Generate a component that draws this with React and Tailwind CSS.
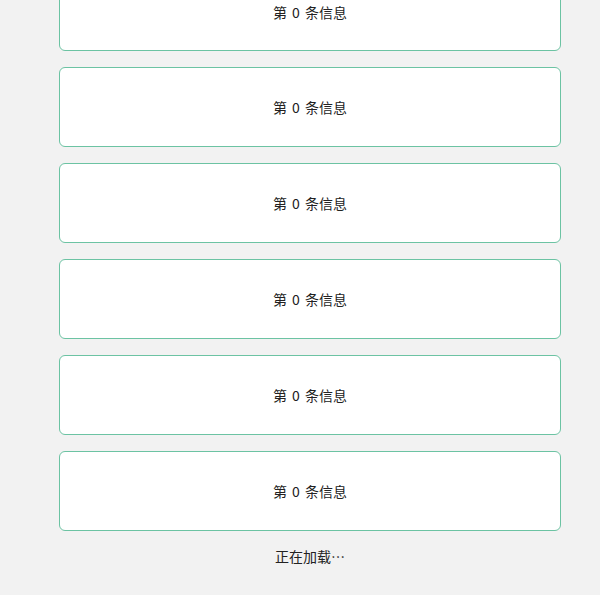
export default function App() {
  const items = [0, 1, 2, 3, 4, 5];
  return (
    <div
      className="min-h-[595px] bg-[#f2f2f2] overflow-hidden"
      style={{ fontFamily: '"Noto Sans CJK SC", "Noto Sans", sans-serif' }}
    >
      <div className="-mt-[28px] ml-[59px] w-[502px] flex flex-col gap-4">
        {items.map((i) => (
          <div
            key={i}
            className={
              "rounded-md border border-[#6cc3a3] bg-white flex items-center justify-center text-sm text-[#222] " +
              (i === 0 ? "h-[79px]" : "h-[80px]")
            }
          >
            第<span className="mx-[5px]">0</span>条信息
          </div>
        ))}
      </div>
      <div className="ml-[59px] w-[502px] pt-[15px] h-5 box-content text-center text-sm leading-5 text-[#222]">
        正在加载…
      </div>
    </div>
  );
}
